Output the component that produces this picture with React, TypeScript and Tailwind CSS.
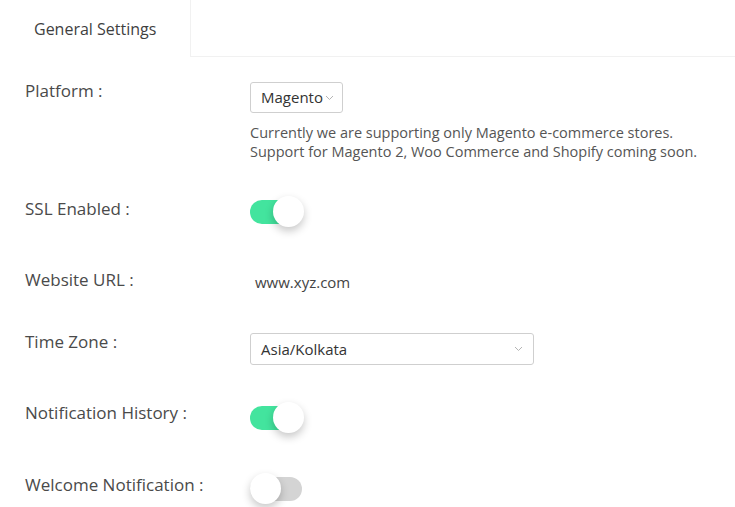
import React from "react";

const font = { fontFamily: '"Open Sans", "Noto Sans", sans-serif' };

function Chevron({ className = "" }: { className?: string }) {
  return (
    <svg width="9" height="6" viewBox="0 0 9 6" className={className}>
      <path d="M1 1 L4.5 4.5 L8 1" fill="none" stroke="#b5b5b5" strokeWidth="1" />
    </svg>
  );
}

function Toggle({ on }: { on: boolean }) {
  return (
    <div className="relative w-[55px] h-[32px]">
      <div
        className={`absolute left-0 top-[4px] w-[52px] h-[24px] rounded-full ${
          on ? "bg-[#43e49e]" : "bg-[#d4d4d4]"
        }`}
      />
      <div
        className={`absolute top-0 w-[31px] h-[31px] rounded-full bg-white shadow-[0_4px_9px_rgba(0,0,0,0.22)] ${
          on ? "left-[23px]" : "left-0"
        }`}
      />
    </div>
  );
}

function Label({ children }: { children: React.ReactNode }) {
  return (
    <div className="w-[225px] shrink-0 text-[17px] leading-[24px] text-[#4a4a4a]">
      {children}
    </div>
  );
}

export default function App() {
  return (
    <div className="w-[735px] h-[507px] bg-white overflow-hidden" style={font}>
      <div className="flex h-[57px]">
        <div className="w-[191px] h-[57px] border-r border-[#f1f1f1] flex items-center pl-[34px] text-[16px] text-[#3f3f3f]">
          General Settings
        </div>
        <div className="flex-1 border-b border-[#f1f1f1]" />
      </div>

      <div className="pl-[25px] pt-[22px]">
        <div className="flex h-[118px]">
          <Label>Platform :</Label>
          <div>
            <div className="mt-[3px] w-[93px] h-[31px] border border-[#cfcfcf] rounded-[3px] flex items-center pl-[10px] text-[15px] text-[#333]">
              <span>Magento</span>
              <Chevron className="ml-[2px] mt-[1px]" />
            </div>
            <div className="mt-[10px] text-[14.5px] leading-[19px] text-[#555]">
              Currently we are supporting only Magento e-commerce stores.
              <br />
              Support for Magento 2, Woo Commerce and Shopify coming soon.
            </div>
          </div>
        </div>

        <div className="flex h-[71px]">
          <Label>SSL Enabled :</Label>
          <div className="mt-[-1px]">
            <Toggle on />
          </div>
        </div>

        <div className="flex h-[62px]">
          <Label>Website URL :</Label>
          <div className="ml-[5px] mt-[5px] text-[15px] leading-[19px] text-[#444]">www.xyz.com</div>
        </div>

        <div className="flex h-[71px]">
          <Label>Time Zone :</Label>
          <div className="mt-[3px] w-[284px] h-[32px] border border-[#cfcfcf] rounded-[3px] flex items-center justify-between pl-[10px] pr-[10px] text-[15px] text-[#333]">
            <span>Asia/Kolkata</span>
            <Chevron />
          </div>
        </div>

        <div className="flex h-[72px]">
          <Label>Notification History :</Label>
          <div className="mt-[1px]">
            <Toggle on />
          </div>
        </div>

        <div className="flex">
          <Label>Welcome Notification :</Label>
          <div className="mt-[0px]">
            <Toggle on={false} />
          </div>
        </div>
      </div>
    </div>
  );
}
